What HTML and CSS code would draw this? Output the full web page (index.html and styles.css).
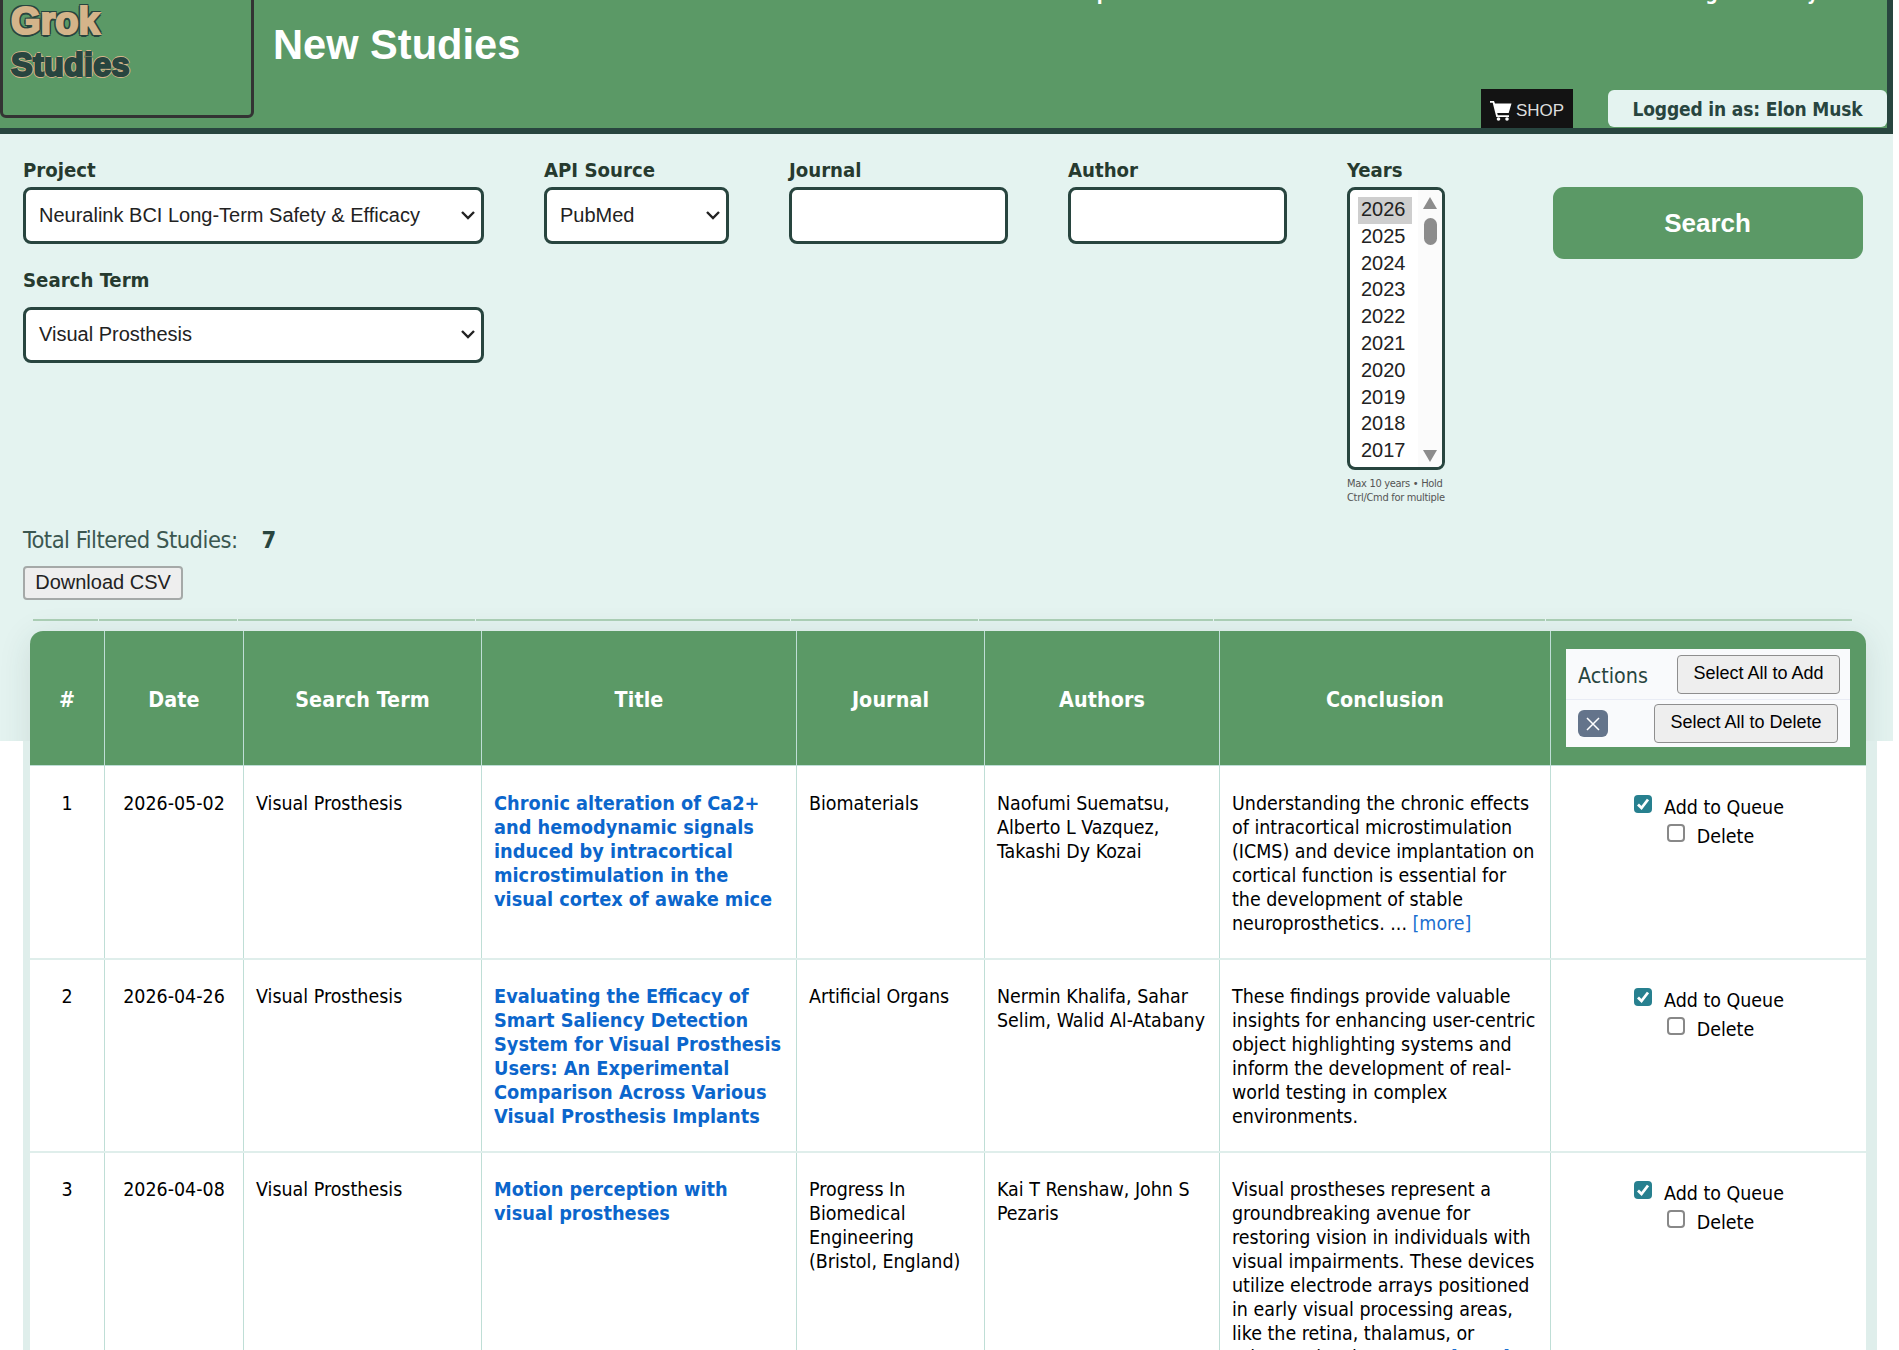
FILE: index.html
```html
<!DOCTYPE html>
<html lang="en">
<head>
<meta charset="utf-8">
<title>New Studies</title>
<link rel="stylesheet" href="styles.css">
</head>
<body>
<div class="app">
  <header class="header">
    <div class="logo"><span class="logo-a">Grok</span><span class="logo-b">Studies</span></div>
    <h1 class="title">New Studies</h1>
    <div class="header-right">
      <nav class="nav"><span class="n1">Help</span><span class="n2">New Studies</span><span class="n3">Review Studies</span><span class="n4">Password</span><span class="n5">Logout</span><span class="n6">My Profile</span></nav>
      <div class="account">
        <a class="shop"><svg width="22" height="22" viewBox="0 0 22 22"><path d="M0 1h4l1 2.500h16.500l-2.800 9.500H7.200l.6 2.200H19v1.800H6.300L2.700 2.800H0z" fill="#fff"/><circle cx="8.500" cy="19" r="1.800" fill="#fff"/><circle cx="17" cy="19" r="1.800" fill="#fff"/></svg><span>SHOP</span></a>
        <div class="user">Logged in as: Elon Musk</div>
      </div>
    </div>
  </header>
  <form class="filters">
    <div class="field f-project">
      <label>Project</label>
      <div class="select"><span class="t-project">Neuralink BCI Long-Term Safety &amp; Efficacy</span><svg class="chev" width="14" height="9" viewBox="0 0 14 9"><path d="M1 1l6 6 6-6"/></svg></div>
      <label class="l-term">Search Term</label>
      <div class="select"><span>Visual Prosthesis</span><svg class="chev" width="14" height="9" viewBox="0 0 14 9"><path d="M1 1l6 6 6-6"/></svg></div>
    </div>
    <div class="field f-api">
      <label>API Source</label>
      <div class="select"><span>PubMed</span><svg class="chev" width="14" height="9" viewBox="0 0 14 9"><path d="M1 1l6 6 6-6"/></svg></div>
    </div>
    <div class="field f-text"><label>Journal</label><div class="select"></div></div>
    <div class="field f-text"><label>Author</label><div class="select"></div></div>
    <div class="field f-years">
      <label>Years</label>
      <div class="years">
        <div class="year-list"><span class="sel">2026</span><span>2025</span><span>2024</span><span>2023</span><span>2022</span><span>2021</span><span>2020</span><span>2019</span><span>2018</span><span>2017</span></div>
        <div class="scroll"><i class="up"></i><i class="thumb"></i><i class="down"></i></div>
      </div>
      <div class="hint"><div>Max 10 years • Hold</div><div>Ctrl/Cmd for multiple</div></div>
    </div>
    <div class="search">Search</div>
  </form>
  <div class="summary">
    <div class="total"><span>Total Filtered Studies:</span><b>7</b></div>
    <div class="csv">Download CSV</div>
  </div>
  <div class="glow"></div>
</div>
<div class="results">
  <div class="rule"><i></i><i></i><i></i><i></i><i></i><i></i><i></i><i></i></div>
  <div class="panel">
    <div class="grid head">
      <div>#</div><div>Date</div><div>Search Term</div><div>Title</div><div>Journal</div><div>Authors</div><div>Conclusion</div>
      <div class="actions-cell">
        <div class="actions">
          <div class="act-row"><span class="act-label">Actions</span><span class="btn btn-add">Select All to Add</span></div>
          <div class="act-row second"><span class="x"><svg width="14" height="14" viewBox="0 0 14 14"><path d="M1 1l12 12M13 1L1 13"/></svg></span><span class="btn btn-del">Select All to Delete</span></div>
        </div>
      </div>
    </div>
    <div class="grid row">
      <div class="c">1</div><div class="c">2026-05-02</div><div>Visual Prosthesis</div>
      <div class="link">Chronic alteration of Ca2+<br>and hemodynamic signals<br>induced by intracortical<br>microstimulation in the<br>visual cortex of awake mice</div>
      <div>Biomaterials</div>
      <div>Naofumi Suematsu,<br>Alberto L Vazquez,<br>Takashi Dy Kozai</div>
      <div>Understanding the chronic effects<br>of intracortical microstimulation<br>(ICMS) and device implantation on<br>cortical function is essential for<br>the development of stable<br>neuroprosthetics. ... <a>[more]</a></div>
      <div class="opts"><div class="opt"><span class="box on"><svg width="18" height="18" viewBox="0 0 18 18"><path d="M4 9.500l3.500 3.500L14 4.500"/></svg></span>Add to Queue</div><div class="opt"><span class="box"></span>Delete</div></div>
    </div>
    <div class="grid row">
      <div class="c">2</div><div class="c">2026-04-26</div><div>Visual Prosthesis</div>
      <div class="link">Evaluating the Efficacy of<br>Smart Saliency Detection<br>System for Visual Prosthesis<br>Users: An Experimental<br>Comparison Across Various<br>Visual Prosthesis Implants</div>
      <div>Artificial Organs</div>
      <div>Nermin Khalifa, Sahar<br>Selim, Walid Al-Atabany</div>
      <div>These findings provide valuable<br>insights for enhancing user-centric<br>object highlighting systems and<br>inform the development of real-<br>world testing in complex<br>environments.</div>
      <div class="opts"><div class="opt"><span class="box on"><svg width="18" height="18" viewBox="0 0 18 18"><path d="M4 9.500l3.500 3.500L14 4.500"/></svg></span>Add to Queue</div><div class="opt"><span class="box"></span>Delete</div></div>
    </div>
    <div class="grid row">
      <div class="c">3</div><div class="c">2026-04-08</div><div>Visual Prosthesis</div>
      <div class="link">Motion perception with<br>visual prostheses</div>
      <div>Progress In<br>Biomedical<br>Engineering<br>(Bristol, England)</div>
      <div>Kai T Renshaw, John S<br>Pezaris</div>
      <div>Visual prostheses represent a<br>groundbreaking avenue for<br>restoring vision in individuals with<br>visual impairments. These devices<br>utilize electrode arrays positioned<br>in early visual processing areas,<br>like the retina, thalamus, or<br>primary visual cortex. ... <a>[more]</a></div>
      <div class="opts"><div class="opt"><span class="box on"><svg width="18" height="18" viewBox="0 0 18 18"><path d="M4 9.500l3.500 3.500L14 4.500"/></svg></span>Add to Queue</div><div class="opt"><span class="box"></span>Delete</div></div>
    </div>
  </div>
</div>
</body>
</html>
```
FILE: styles.css
```css
* { box-sizing: border-box; }
html { background: #fff; }
body { margin: 0; height: 1350px; overflow: hidden; font-family: "DejaVu Sans Condensed", "DejaVu Sans", sans-serif; font-stretch: condensed; font-size: 19px; color: #000; }
.app { height: 741px; width: 1893px; background: #e4f3f0; overflow: hidden; }
.header { display: flex; width: 1893px; height: 134px; background: #5b9966; border-bottom: 6px solid #28453f; border-right: 6px solid #28453f; overflow: hidden; }
.logo { width: 254px; height: 130px; margin-top: -12px; border: 3px solid #333; border-radius: 6px; padding: 8px 0 0 8px; display: flex; flex-direction: column; font: bold 38px/44px "Liberation Sans", Arial, sans-serif; white-space: nowrap; }
.logo-a { color: #d4b48a; -webkit-text-stroke: 2.200px #d4b48a; text-shadow: 2.500px 0 #28453f, -2.500px 0 #28453f, 0 2.500px #28453f, 0 -2.500px #28453f, 2px 2px #28453f, -2px 2px #28453f, 2px -2px #28453f, -2px -2px #28453f; }
.logo-b { color: #28453f; font-size: 32.500px; letter-spacing: .2px; -webkit-text-stroke: 2px #28453f; text-shadow: 2px 0 #d4b48a, -2px 0 #d4b48a, 0 2px #d4b48a, 0 -2px #d4b48a, 1.300px 1.300px #d4b48a, -1.300px 1.300px #d4b48a, 1.300px -1.300px #d4b48a, -1.300px -1.300px #d4b48a; }
.title { margin: 0 0 0 19px; font: bold 41.600px/48px "Liberation Sans", Arial, sans-serif; color: #fff; padding-top: 21px; white-space: nowrap; }
.header-right { margin-left: auto; display: flex; flex-direction: column; justify-content: space-between; align-items: flex-end; }
.nav { display: flex; width: 840px; margin-top: -19px; height: 24px; font: bold 19px/24px "DejaVu Sans Condensed", "DejaVu Sans", sans-serif; color: #fff; white-space: nowrap; }
.nav .n1 { margin-left: 18px; width: 75px; }
.nav .n2 { width: 157px; }
.nav .n3 { width: 285px; }
.nav .n4 { width: 111px; }
.nav .n5 { width: 109px; }
.account { display: flex; align-items: flex-end; gap: 35px; }
.shop { display: flex; align-items: center; justify-content: center; gap: 4px; width: 92px; height: 39px; background: #131313; color: #ddd; font: 17px "Liberation Sans", Arial, sans-serif; padding-top: 4px; }
.user { width: 279px; height: 37px; margin-bottom: 1px; border-radius: 6px; background: #e4f3f0; color: #28453f; text-align: center; font-weight: bold; font-size: 19px; letter-spacing: -.15px; line-height: 39px; }
.filters { display: flex; height: 382px; padding: 24px 0 0 23px; }
.field { display: flex; flex-direction: column; }
.field label { font-weight: bold; font-size: 20.200px; line-height: 24px; margin-bottom: 5px; color: #263a2f; white-space: nowrap; }
.field .l-term { margin-top: 24px; margin-bottom: 15px; }
.f-project { width: 461px; margin-right: 60px; }
.f-api { width: 185px; margin-right: 60px; }
.f-text { width: 219px; margin-right: 60px; }
.f-years { width: 98px; margin-right: 107.500px; }
.select { height: 56.500px; border: 3px solid #28453f; border-radius: 8px; background: #fff; display: flex; align-items: center; justify-content: space-between; padding: 0 6px 0 13px; font: 20px "Liberation Sans", Arial, sans-serif; color: #222; white-space: nowrap; }
.chev path { fill: none; stroke: #222; stroke-width: 2.4; }
.years { height: 283px; border: 3px solid #28453f; border-radius: 8px; background: #fff; display: flex; justify-content: space-between; overflow: hidden; font: 20px/26.800px "Liberation Sans", Arial, sans-serif; color: #222; }
.year-list { padding: 7px 0 0 8px; display: flex; flex-direction: column; }
.year-list span { width: 54px; padding-left: 3px; height: 26.800px; line-height: 24px; }
.year-list .sel { background: #cecece; }
.scroll { width: 24px; background: #fbfbfb; display: flex; flex-direction: column; align-items: center; padding-top: 7px; }
.up { border: 7px solid transparent; border-top: 0; border-bottom: 12px solid #8c8c8c; }
.thumb { width: 13px; height: 27px; border-radius: 7px; background: #8c8c8c; margin-top: 9px; }
.down { border: 7px solid transparent; border-bottom: 0; border-top: 12px solid #8c8c8c; margin-top: 205px; }
.hint { font-size: 11px; letter-spacing: -.3px; line-height: 13.500px; color: #555; padding-top: 7px; white-space: nowrap; }
.search { width: 310px; height: 72px; margin-top: 29px; border-radius: 11px; background: #5b9966; color: #fff; font: bold 26px/72px "Liberation Sans", Arial, sans-serif; text-align: center; }
.summary { padding: 9px 0 0 23px; }
.total { display: flex; gap: 24px; font-size: 23.500px; line-height: 30px; color: #3b5750; }
.total span { letter-spacing: -.5px; }
.total b { color: #28453f; }
.csv { margin-top: 11px; width: 160px; height: 34px; border: 2px solid #a5a9a8; border-radius: 4px; background: #eee; color: #222; font: 20px/28px "Liberation Sans", Arial, sans-serif; text-align: center; white-space: nowrap; }
.glow { height: 200px; margin: 31px 27px 0 30px; border-radius: 15px; box-shadow: 0 6px 32px #28453f20; }
.results { width: 1854px; margin: -122px 0 0 23px; background: linear-gradient(transparent 122px, #dfeeeb 122px); }
.rule { height: 12px; padding: 0 0 0 10px; display: grid; grid-template-columns: 66px 139px 238px 315px 188px 235px 332px 307px; }
.rule i { height: 2px; background: #aacdb4; border-right: 1px solid #e4f3f0; }
.panel { margin: 0 11px 0 7px; background: #fff; border-radius: 15px 15px 0 0; }
.grid { display: grid; grid-template-columns: 75px 139px 238px 315px 188px 235px 331px 315px; }
.grid > div { border-right: 1px solid #bfded6; }
.grid > div:last-child { border-right: 0; }
.head { height: 134px; background: #5b9966; border-radius: 13px 13px 0 0; color: #fff; font-weight: bold; font-size: 21.300px; letter-spacing: .1px; }
.head > div { display: flex; align-items: center; justify-content: center; padding-top: 2px; }
.head .actions-cell { padding-top: 0; }
.actions { width: 284px; height: 98px; margin-right: 1px; background: #f9fafc; color: #28453f; font-weight: normal; letter-spacing: 0; }
.act-row { display: flex; height: 50px; padding: 0 10px 0 12px; justify-content: space-between; align-items: center; }
.act-row.second { height: 48px; border-top: 1px solid #e9ecf5; padding-right: 12px; }
.act-label { font-size: 21.300px; padding-top: 2px; }
.btn { height: 39px; border: 2px solid #8e8e8e; border-width: 1.500px; border-radius: 4px; background: #eee; color: #000; font: 18px/35px "Liberation Sans", Arial, sans-serif; text-align: center; white-space: nowrap; }
.btn-add { width: 163px; }
.btn-del { width: 184px; }
.x { width: 30px; height: 27px; border-radius: 6px; background: #64748b; display: flex; align-items: center; justify-content: center; }
.x path { stroke: #fff; stroke-width: 1.500; }
.row { height: 193px; border-top: 1px solid #bfded6; line-height: 24px; font-size: 19.450px; white-space: nowrap; }
.row + .row { border-top: 2px solid #dfeeeb; }
.row:last-child { height: 260px; }
.row > div { padding: 26px 0 0 12px; }
.row + .row > div { padding-top: 25px; }
.row .c { text-align: center; padding-left: 0; }
.row a { color: #1a6fd0; }
.row .link { font-weight: bold; color: #0b66cc; font-size: 19.750px; }
.row .opts { padding: 29px 0 0 1px; display: flex; flex-direction: column; align-items: center; }
.row + .row .opts { padding: 28px 0 0 1px; }
.opt { display: flex; line-height: 26px; height: 29px; }
.opt + .opt { padding-left: 3px; }
.box { width: 18px; height: 18px; border: 2px solid #888; border-radius: 4px; margin: 0 12px 0 0; }
.box.on { border: 0; background: #27808f; }
.box svg { display: block; }
.box path { fill: none; stroke: #fff; stroke-width: 2.800; }
```
